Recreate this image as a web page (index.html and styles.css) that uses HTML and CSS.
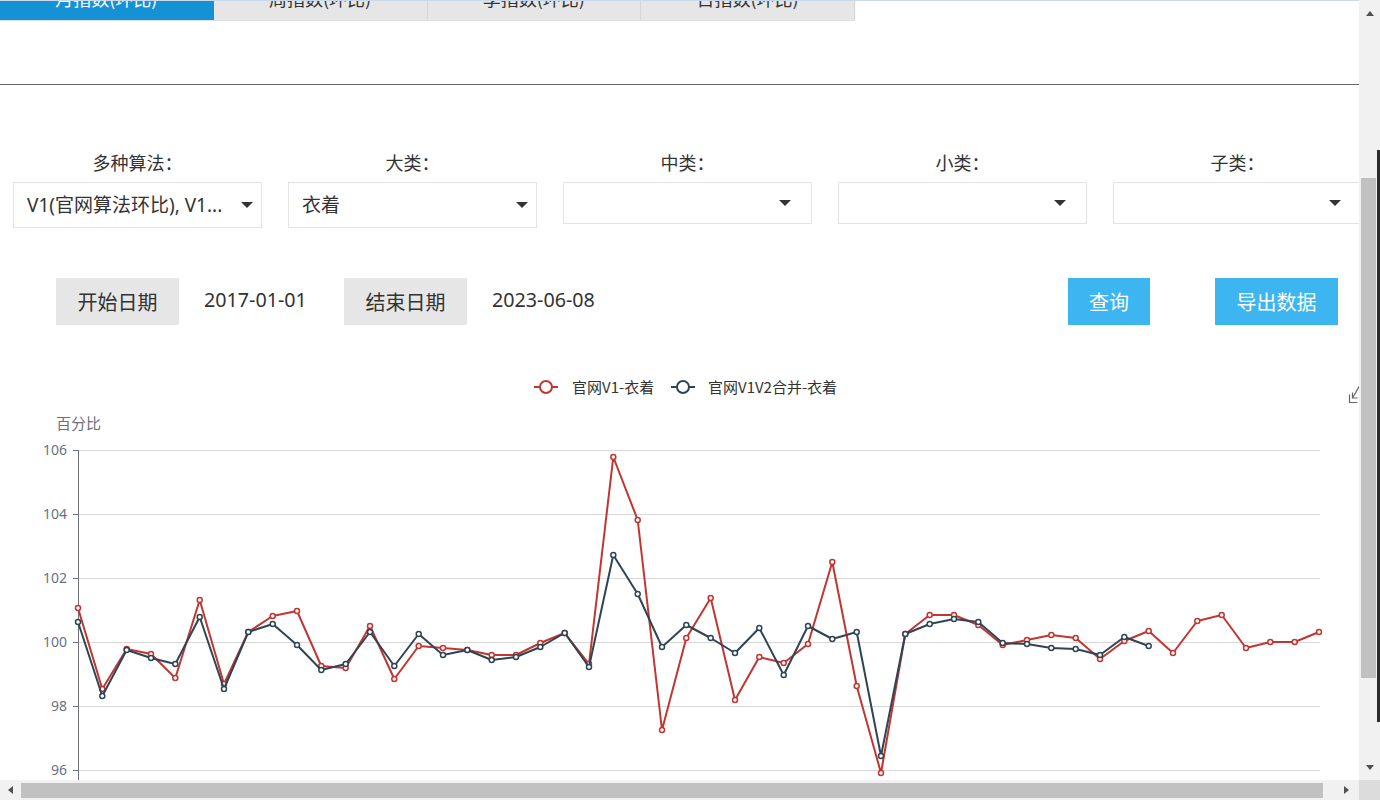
FILE: index.html
```html
<!DOCTYPE html>
<html lang="zh-CN">
<head>
<meta charset="utf-8">
<title>指数</title>
<link rel="stylesheet" href="styles.css">
</head>
<body>
<div class="window">
  <main class="viewport">
    <nav class="tabs">
      <div class="tab active">月指数(环比)</div>
      <div class="tab">周指数(环比)</div>
      <div class="tab">季指数(环比)</div>
      <div class="tab">日指数(环比)</div>
    </nav>
    <div class="rule"></div>

    <section class="filters">
      <div class="field">
        <div class="field-label">多种算法：</div>
        <div class="select"><span class="select-text">V1(官网算法环比), V1...</span><span class="caret"></span></div>
      </div>
      <div class="field">
        <div class="field-label">大类：</div>
        <div class="select"><span class="select-text">衣着</span><span class="caret"></span></div>
      </div>
      <div class="field">
        <div class="field-label">中类：</div>
        <div class="select empty"><span class="select-text"></span><span class="caret"></span></div>
      </div>
      <div class="field">
        <div class="field-label">小类：</div>
        <div class="select empty"><span class="select-text"></span><span class="caret"></span></div>
      </div>
      <div class="field">
        <div class="field-label">子类：</div>
        <div class="select empty"><span class="select-text"></span><span class="caret"></span></div>
      </div>
    </section>

    <section class="dates">
      <div class="date-label">开始日期</div>
      <div class="date-value">2017-01-01</div>
      <div class="date-label">结束日期</div>
      <div class="date-value">2023-06-08</div>
      <button class="btn btn-query">查询</button>
      <button class="btn btn-export">导出数据</button>
    </section>

    <section class="chart">
      <svg class="chart-svg" width="1359" height="455" viewBox="0 325 1359 455" xmlns="http://www.w3.org/2000/svg">
        <!-- legend -->
        <g class="legend">
          <line x1="534" y1="387" x2="558" y2="387" stroke="#c23531" stroke-width="2"/>
          <circle cx="546" cy="387" r="6" fill="#fff" stroke="#c23531" stroke-width="2"/>
          <text x="572" y="392.5" class="legend-text">官网V1-衣着</text>
          <line x1="671" y1="387" x2="695" y2="387" stroke="#2f4554" stroke-width="2"/>
          <circle cx="683" cy="387" r="6" fill="#fff" stroke="#2f4554" stroke-width="2"/>
          <text x="708" y="392.5" class="legend-text">官网V1V2合并-衣着</text>
        </g>

        <!-- toolbox icon -->
        <g fill="none" stroke="#666" stroke-width="1.2">
          <path d="M1349.5 394.5 V402.5 H1357.5"/>
          <path d="M1360 385 L1352.5 398"/>
          <path d="M1352.5 392.5 V398 H1357.5"/>
        </g>

        <!-- axis name -->
        <text x="56" y="428.5" class="axis-text">百分比</text>

        <!-- grid -->
        <g stroke="#d9d9d9" stroke-width="1">
          <line x1="78" y1="450.5" x2="1320" y2="450.5"/>
          <line x1="78" y1="514.5" x2="1320" y2="514.5"/>
          <line x1="78" y1="578.5" x2="1320" y2="578.5"/>
          <line x1="78" y1="642.5" x2="1320" y2="642.5"/>
          <line x1="78" y1="706.5" x2="1320" y2="706.5"/>
          <line x1="78" y1="770.5" x2="1320" y2="770.5"/>
        </g>

        <!-- y axis -->
        <g stroke="#6e7079" stroke-width="1">
          <line x1="78.5" y1="450" x2="78.5" y2="790"/>
          <line x1="73" y1="450.5" x2="78" y2="450.5"/>
          <line x1="73" y1="514.5" x2="78" y2="514.5"/>
          <line x1="73" y1="578.5" x2="78" y2="578.5"/>
          <line x1="73" y1="642.5" x2="78" y2="642.5"/>
          <line x1="73" y1="706.5" x2="78" y2="706.5"/>
          <line x1="73" y1="770.5" x2="78" y2="770.5"/>
        </g>
        <g class="tick-text" text-anchor="end">
          <text x="67" y="455">106</text>
          <text x="67" y="519">104</text>
          <text x="67" y="583">102</text>
          <text x="67" y="647">100</text>
          <text x="67" y="711">98</text>
          <text x="67" y="775">96</text>
        </g>

        <!-- series 1 -->
        <polyline fill="none" stroke="#c23531" stroke-width="2" stroke-linejoin="round"
          points="78,608 102.3,689 126.7,649 151,654 175.3,678 199.7,600 224,684 248.3,632 272.7,616 297,611 321.3,666 345.7,668 370,626 394.3,679 418.7,646 443,648 467.3,650 491.7,655 516,655 540.3,643 564.7,633 589,664 613.3,457 637.7,520 662,730 686.3,638 710.7,598 735,700 759.3,657 783.7,663 808,644 832.3,562 856.7,686 881,773 905.3,634 929.7,615 954,615 978.3,625 1002.7,645 1027,640 1051.3,635 1075.7,638 1100,659 1124.3,641 1148.7,631 1173,653 1197.3,621 1221.7,615 1246,648 1270.3,642 1294.7,642 1319,632"/>
        <g fill="#fff" stroke="#c23531" stroke-width="1.5">
          <circle cx="78" cy="608" r="2.5"/><circle cx="102.3" cy="689" r="2.5"/><circle cx="126.7" cy="649" r="2.5"/><circle cx="151" cy="654" r="2.5"/><circle cx="175.3" cy="678" r="2.5"/><circle cx="199.7" cy="600" r="2.5"/><circle cx="224" cy="684" r="2.5"/><circle cx="248.3" cy="632" r="2.5"/><circle cx="272.7" cy="616" r="2.5"/><circle cx="297" cy="611" r="2.5"/><circle cx="321.3" cy="666" r="2.5"/><circle cx="345.7" cy="668" r="2.5"/><circle cx="370" cy="626" r="2.5"/><circle cx="394.3" cy="679" r="2.5"/><circle cx="418.7" cy="646" r="2.5"/><circle cx="443" cy="648" r="2.5"/><circle cx="467.3" cy="650" r="2.5"/><circle cx="491.7" cy="655" r="2.5"/><circle cx="516" cy="655" r="2.5"/><circle cx="540.3" cy="643" r="2.5"/><circle cx="564.7" cy="633" r="2.5"/><circle cx="589" cy="664" r="2.5"/><circle cx="613.3" cy="457" r="2.5"/><circle cx="637.7" cy="520" r="2.5"/><circle cx="662" cy="730" r="2.5"/><circle cx="686.3" cy="638" r="2.5"/><circle cx="710.7" cy="598" r="2.5"/><circle cx="735" cy="700" r="2.5"/><circle cx="759.3" cy="657" r="2.5"/><circle cx="783.7" cy="663" r="2.5"/><circle cx="808" cy="644" r="2.5"/><circle cx="832.3" cy="562" r="2.5"/><circle cx="856.7" cy="686" r="2.5"/><circle cx="881" cy="773" r="2.5"/><circle cx="905.3" cy="634" r="2.5"/><circle cx="929.7" cy="615" r="2.5"/><circle cx="954" cy="615" r="2.5"/><circle cx="978.3" cy="625" r="2.5"/><circle cx="1002.7" cy="645" r="2.5"/><circle cx="1027" cy="640" r="2.5"/><circle cx="1051.3" cy="635" r="2.5"/><circle cx="1075.7" cy="638" r="2.5"/><circle cx="1100" cy="659" r="2.5"/><circle cx="1124.3" cy="641" r="2.5"/><circle cx="1148.7" cy="631" r="2.5"/><circle cx="1173" cy="653" r="2.5"/><circle cx="1197.3" cy="621" r="2.5"/><circle cx="1221.7" cy="615" r="2.5"/><circle cx="1246" cy="648" r="2.5"/><circle cx="1270.3" cy="642" r="2.5"/><circle cx="1294.7" cy="642" r="2.5"/><circle cx="1319" cy="632" r="2.5"/>
        </g>

        <!-- series 2 -->
        <polyline fill="none" stroke="#2f4554" stroke-width="2" stroke-linejoin="round"
          points="78,622 102.3,696 126.7,650 151,658 175.3,664 199.7,617 224,689 248.3,632 272.7,624 297,645 321.3,670 345.7,664 370,632 394.3,666 418.7,634 443,655 467.3,650 491.7,660 516,657 540.3,647 564.7,633 589,667 613.3,555 637.7,594 662,647 686.3,625 710.7,638 735,653 759.3,628 783.7,675 808,626 832.3,639 856.7,632 881,756 905.3,634 929.7,624 954,619 978.3,622 1002.7,643 1027,644 1051.3,648 1075.7,649 1100,655 1124.3,637 1148.7,646"/>
        <g fill="#fff" stroke="#2f4554" stroke-width="1.5">
          <circle cx="78" cy="622" r="2.5"/><circle cx="102.3" cy="696" r="2.5"/><circle cx="126.7" cy="650" r="2.5"/><circle cx="151" cy="658" r="2.5"/><circle cx="175.3" cy="664" r="2.5"/><circle cx="199.7" cy="617" r="2.5"/><circle cx="224" cy="689" r="2.5"/><circle cx="248.3" cy="632" r="2.5"/><circle cx="272.7" cy="624" r="2.5"/><circle cx="297" cy="645" r="2.5"/><circle cx="321.3" cy="670" r="2.5"/><circle cx="345.7" cy="664" r="2.5"/><circle cx="370" cy="632" r="2.5"/><circle cx="394.3" cy="666" r="2.5"/><circle cx="418.7" cy="634" r="2.5"/><circle cx="443" cy="655" r="2.5"/><circle cx="467.3" cy="650" r="2.5"/><circle cx="491.7" cy="660" r="2.5"/><circle cx="516" cy="657" r="2.5"/><circle cx="540.3" cy="647" r="2.5"/><circle cx="564.7" cy="633" r="2.5"/><circle cx="589" cy="667" r="2.5"/><circle cx="613.3" cy="555" r="2.5"/><circle cx="637.7" cy="594" r="2.5"/><circle cx="662" cy="647" r="2.5"/><circle cx="686.3" cy="625" r="2.5"/><circle cx="710.7" cy="638" r="2.5"/><circle cx="735" cy="653" r="2.5"/><circle cx="759.3" cy="628" r="2.5"/><circle cx="783.7" cy="675" r="2.5"/><circle cx="808" cy="626" r="2.5"/><circle cx="832.3" cy="639" r="2.5"/><circle cx="856.7" cy="632" r="2.5"/><circle cx="881" cy="756" r="2.5"/><circle cx="905.3" cy="634" r="2.5"/><circle cx="929.7" cy="624" r="2.5"/><circle cx="954" cy="619" r="2.5"/><circle cx="978.3" cy="622" r="2.5"/><circle cx="1002.7" cy="643" r="2.5"/><circle cx="1027" cy="644" r="2.5"/><circle cx="1051.3" cy="648" r="2.5"/><circle cx="1075.7" cy="649" r="2.5"/><circle cx="1100" cy="655" r="2.5"/><circle cx="1124.3" cy="637" r="2.5"/><circle cx="1148.7" cy="646" r="2.5"/>
        </g>
      </svg>
    </section>

    <div class="topline"></div>
  </main>

  <div class="vscroll">
    <div class="vbtn"><span class="tri-up"></span></div>
    <div class="vthumb"></div>
    <div class="vspace"></div>
    <div class="vbtn"><span class="tri-down"></span></div>
    <div class="edge-strip"></div>
  </div>

  <div class="hscroll">
    <div class="hbtn"><span class="tri-left"></span></div>
    <div class="hthumb"></div>
    <div class="hspace"></div>
    <div class="hbtn hbtn-right"><span class="tri-right"></span></div>
  </div>

  <div class="corner"></div>
</div>
</body>
</html>
```

FILE: styles.css
```css
html, body {
  margin: 0;
  padding: 0;
  background: #fff;
  overflow: hidden;
}

body {
  font-family: "Noto Sans", "Noto Sans CJK SC", sans-serif;
  color: #333;
}

.window {
  display: grid;
  grid-template-columns: 1359px 21px;
  grid-template-rows: 780px 20px;
  width: 1380px;
  height: 800px;
}

.viewport {
  position: relative;
  overflow: hidden;
  background: #fff;
}

.topline {
  position: absolute;
  top: 0;
  left: 0;
  right: 0;
  height: 1px;
  background: #c9d9ec;
}

/* tabs */
.tabs {
  display: flex;
  width: 855px;
  height: 44px;
  margin-top: -24px;
  box-shadow: 0 1px 1px rgba(0, 0, 0, 0.12);
}

.tab {
  flex: 1;
  box-sizing: border-box;
  background: #e6e6e6;
  border-right: 1px solid #d6d6d6;
  text-align: center;
  line-height: 44px;
  font-size: 18px;
  color: #333;
  font-family: "Noto Sans CJK SC", sans-serif;
}

.tab.active {
  background: #1592d6;
  color: #fff;
  border-right-color: #1592d6;
}

.rule {
  margin-top: 64px;
  border-top: 1px solid #666;
}

/* filters */
.filters {
  display: grid;
  grid-template-columns: repeat(5, 249px);
  column-gap: 26px;
  padding-left: 13px;
  margin-top: 65px;
}

.field-label {
  font-size: 18px;
  line-height: 24px;
  height: 24px;
  text-align: center;
  margin-bottom: 8px;
  font-family: "Noto Sans CJK SC", sans-serif;
}

.select {
  box-sizing: border-box;
  height: 46px;
  border: 1px solid #e3e3e3;
  background: #fff;
  display: flex;
  align-items: center;
  padding: 0 8px 0 13px;
}

.select.empty {
  height: 42px;
  margin-top: 2px;
  padding-right: 20px;
}

.select-text {
  flex: 1;
  font-size: 19px;
  line-height: 26px;
  white-space: nowrap;
  overflow: hidden;
}

.caret {
  width: 0;
  height: 0;
  border-left: 6px solid transparent;
  border-right: 6px solid transparent;
  border-top: 6px solid #333;
}

/* dates row */
.dates {
  display: flex;
  align-items: flex-start;
  height: 47px;
  margin-top: 50px;
  padding: 0 21px 0 56px;
}

.date-label {
  width: 123px;
  height: 47px;
  background: #e6e6e6;
  font-size: 20px;
  line-height: 47px;
  text-align: center;
  font-family: "Noto Sans CJK SC", sans-serif;
}

.date-value {
  box-sizing: border-box;
  width: 165px;
  padding-left: 25px;
  font-size: 19.7px;
  line-height: 44px;
}

.btn {
  border: 0;
  padding: 0;
  height: 47px;
  background: #3cb5f0;
  color: #fff;
  font-size: 20px;
  font-family: "Noto Sans CJK SC", sans-serif;
  line-height: 47px;
}

.btn-query {
  width: 82px;
  margin-left: auto;
}

.btn-export {
  width: 123px;
  margin-left: 65px;
}

/* chart */
.chart {
  height: 455px;
}

.chart-svg {
  display: block;
}

.legend-text {
  font-family: "Noto Sans CJK SC", sans-serif;
  font-size: 15px;
  fill: #333;
}

.axis-text {
  font-family: "Noto Sans CJK SC", sans-serif;
  font-size: 15px;
  fill: #6e7079;
}

.tick-text {
  font-family: "Noto Sans", sans-serif;
  font-size: 14px;
  fill: #6e7079;
}

/* scrollbars */
.vscroll {
  position: relative;
  display: flex;
  flex-direction: column;
  background: #f1f1f1;
}

.vbtn {
  height: 26px;
  display: flex;
  align-items: center;
  justify-content: center;
}

.vthumb {
  margin-top: 152px;
  margin-left: 2px;
  width: 15px;
  height: 500px;
  background: #c1c1c1;
}

.vspace {
  flex: 1;
}

.tri-up {
  width: 0;
  height: 0;
  border-left: 4px solid transparent;
  border-right: 4px solid transparent;
  border-bottom: 5px solid #505050;
}

.tri-down {
  width: 0;
  height: 0;
  border-left: 4px solid transparent;
  border-right: 4px solid transparent;
  border-top: 5px solid #505050;
}

.edge-strip {
  position: absolute;
  right: 0;
  top: 150px;
  width: 3px;
  height: 572px;
  background: #2b2b2b;
}

.hscroll {
  display: flex;
  align-items: center;
  background: #f1f1f1;
}

.hbtn {
  width: 21px;
  height: 20px;
  display: flex;
  align-items: center;
  justify-content: center;
}

.hbtn-right {
  margin-right: 2px;
}

.hthumb {
  width: 1302px;
  height: 15px;
  background: #c1c1c1;
}

.hspace {
  flex: 1;
}

.tri-left {
  width: 0;
  height: 0;
  border-top: 4px solid transparent;
  border-bottom: 4px solid transparent;
  border-right: 5px solid #505050;
}

.tri-right {
  width: 0;
  height: 0;
  border-top: 4px solid transparent;
  border-bottom: 4px solid transparent;
  border-left: 5px solid #505050;
}

.corner {
  background: #dcdcdc;
}
```
